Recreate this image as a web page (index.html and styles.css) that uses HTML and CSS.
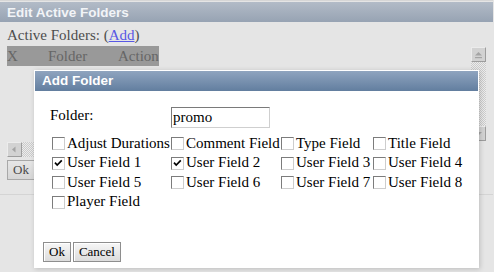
FILE: index.html
```html
<!DOCTYPE html>
<html>
<head>
<meta charset="utf-8">
<title>Edit Active Folders</title>
<link rel="stylesheet" href="styles.css">
</head>
<body>
<div class="page">
  <div class="page-head">Edit Active Folders</div>
  <div class="page-body">
    <div class="active-line">Active Folders: (<a href="#" class="add-link">Add</a>)</div>
    <div class="pane">
      <div class="pane-view">
        <div class="list-head"><span class="c-x">X</span><span class="c-folder">Folder</span><span class="c-action">Action</span></div>
      </div>
      <div class="vscroll">
        <span class="sbtn"><svg width="13" height="13" viewBox="0 0 13 13"><path d="M3 7.5 L6.5 4 L10 7.5 Z" fill="#a4a4a4"/><rect x="3" y="9" width="7" height="1.2" fill="#a4a4a4"/></svg></span>
        <span class="track"></span>
        <span class="sbtn"><svg width="13" height="13" viewBox="0 0 13 13"><path d="M3 5 L6.5 8.5 L10 5 Z" fill="#a4a4a4"/></svg></span>
      </div>
      <div class="hscroll">
        <span class="sbtn"><svg width="13" height="13" viewBox="0 0 13 13"><path d="M7.5 3.5 L4 6.5 L7.5 9.5 Z" fill="#a4a4a4"/></svg></span>
        <span class="track"></span>
        <span class="sbtn"><svg width="13" height="13" viewBox="0 0 13 13"><path d="M5.5 3.5 L9 6.5 L5.5 9.5 Z" fill="#a4a4a4"/></svg></span>
      </div>
      <div class="corner"></div>
    </div>
    <button class="bg-btn" type="button">Ok</button>
  </div>
</div>

<div class="dialog">
  <div class="dlg-head">Add Folder</div>
  <div class="dlg-body">
    <div class="fields">
      <div class="folder-label">Folder:</div>
      <input class="folder-input" type="text" value="promo">

      <label class="opt r1 c1"><span class="box"></span><span class="lbl">Adjust Durations</span></label>
      <label class="opt r1 c2"><span class="box"></span><span class="lbl">Comment Field</span></label>
      <label class="opt r1 c3"><span class="box"></span><span class="lbl">Type Field</span></label>
      <label class="opt r1 c4"><span class="box"></span><span class="lbl">Title Field</span></label>

      <label class="opt r2 c1"><span class="box"><svg width="11" height="11" viewBox="0 0 11 11"><path d="M2 4.6 L4.2 7 L8.8 2.4" fill="none" stroke="#000" stroke-width="1.7"/></svg></span><span class="lbl">User Field 1</span></label>
      <label class="opt r2 c2"><span class="box"><svg width="11" height="11" viewBox="0 0 11 11"><path d="M2 4.6 L4.2 7 L8.8 2.4" fill="none" stroke="#000" stroke-width="1.7"/></svg></span><span class="lbl">User Field 2</span></label>
      <label class="opt r2 c3"><span class="box"></span><span class="lbl">User Field 3</span></label>
      <label class="opt r2 c4"><span class="box"></span><span class="lbl">User Field 4</span></label>

      <label class="opt r3 c1"><span class="box"></span><span class="lbl">User Field 5</span></label>
      <label class="opt r3 c2"><span class="box"></span><span class="lbl">User Field 6</span></label>
      <label class="opt r3 c3"><span class="box"></span><span class="lbl">User Field 7</span></label>
      <label class="opt r3 c4"><span class="box"></span><span class="lbl">User Field 8</span></label>

      <label class="opt r4 c1"><span class="box"></span><span class="lbl">Player Field</span></label>
    </div>
    <div class="dlg-foot">
      <button class="btn" type="button">Ok</button>
      <button class="btn" type="button">Cancel</button>
    </div>
  </div>
</div>
</body>
</html>
```

FILE: styles.css
```css
html, body {
  margin: 0;
  padding: 0;
}

body {
  background: #e5e5e5;
  font-family: "Liberation Serif", "Times New Roman", serif;
  font-size: 15px;
  color: #4a4a4a;
  position: relative;
  width: 494px;
  height: 272px;
  overflow: hidden;
}

.page {
  border-top: 1px solid #d6d6d6;
  padding-top: 1px;
  border-bottom: 1px solid #d4d4d4;
  width: 493px;
}

.page-head {
  height: 20px;
  box-sizing: border-box;
  padding: 1px 0 0 7px;
  line-height: 19px;
  background: linear-gradient(#b2bbc7, #97a3b3);
  color: #f2f4f7;
  font-family: "Liberation Sans", Arial, sans-serif;
  font-weight: bold;
  font-size: 13.5px;
}

.page-body {
  padding: 5px 7px 14px;
}

.active-line {
  line-height: 17px;
  color: #4d4d4d;
}

.add-link {
  color: #5858e4;
  text-decoration: underline;
}

.pane {
  margin-top: 2px;
  width: 480px;
  height: 112px;
  display: grid;
  grid-template-columns: 1fr 16px;
  grid-template-rows: 1fr 16px;
}

.pane-view {
  overflow: hidden;
}

.list-head {
  display: inline-flex;
  background: #999999;
  color: #666666;
  height: 20px;
  line-height: 20px;
}

.c-x { width: 41px; }
.c-folder { width: 70px; }
.c-action { padding-right: 0; }

.vscroll {
  display: flex;
  flex-direction: column;
  padding: 1px 1px 1px 0;
}

.hscroll {
  display: flex;
  padding: 0 0 1px 0;
}

.sbtn {
  width: 15px;
  height: 15px;
  box-sizing: border-box;
  flex: none;
  background: #d2d2d2;
  border: 1px solid;
  border-color: #ececec #9d9d9d #9d9d9d #ececec;
  display: flex;
  align-items: center;
  justify-content: center;
}

.track {
  flex: 1;
  background: repeating-conic-gradient(#cbcbcb 0 25%, #ececec 0 50%) 0 0 / 2px 2px;
}

.corner {
  background: #e5e5e5;
}

.bg-btn {
  margin-top: 2px;
  height: 20px;
  padding: 0 5px;
  font-family: "Liberation Serif", "Times New Roman", serif;
  font-size: 13px;
  color: #4a4a4a;
  background: linear-gradient(#e6e6e6, #d6d6d6);
  border: 1px solid #a8a8a8;
  width: 60px;
  text-align: left;
}

/* dialog overlay */
.dialog {
  position: absolute;
  left: 34px;
  top: 70px;
  width: 445px;
  height: 198px;
  box-sizing: border-box;
  border: 1px solid #ffffff;
  background: #ffffff;
  box-shadow: 1px 1px 5px rgba(0, 0, 0, 0.18);
  color: #000;
}

.dlg-head {
  height: 20px;
  line-height: 20px;
  padding-left: 7px;
  background: linear-gradient(#8fa4bf, #627e9f);
  color: #ffffff;
  font-family: "Liberation Sans", Arial, sans-serif;
  font-weight: bold;
  font-size: 13.5px;
}

.dlg-body {
  padding: 15px 8px 0;
}

.fields {
  margin-left: 9px;
  display: grid;
  grid-template-columns: 119px 110px 92px auto;
  grid-template-rows: 28px repeat(4, 19.5px);
}

.folder-label {
  grid-column: 1;
  grid-row: 1;
  margin: 1px 0 0 -2px;
  line-height: 17px;
}

.folder-input {
  grid-column: 2;
  grid-row: 1;
  align-self: start;
  margin: 1px 0 0 0;
  width: 99px;
  height: 21px;
  box-sizing: border-box;
  padding: 0 1px;
  border: 1px solid;
  border-color: #7a7a7a #cfcfcf #cfcfcf #7a7a7a;
  font-family: "Liberation Serif", "Times New Roman", serif;
  font-size: 15px;
  color: #000;
  outline: none;
}

.opt {
  display: flex;
  align-items: center;
  gap: 2px;
  white-space: nowrap;
}

.opt .lbl {
  line-height: 17px;
  margin-top: -1px;
}

.r1 { grid-row: 2; }
.r2 { grid-row: 3; }
.r3 { grid-row: 4; }
.r4 { grid-row: 5; }
.c1 { grid-column: 1; }
.c2 { grid-column: 2; }
.c3 { grid-column: 3; }
.c4 { grid-column: 4; }

.box {
  width: 13px;
  height: 13px;
  box-sizing: border-box;
  flex: none;
  background: #ffffff;
  border: 1px solid;
  border-color: #7c7c7c #cdcdcd #cdcdcd #7c7c7c;
  display: flex;
  align-items: center;
  justify-content: center;
}

.dlg-foot {
  margin-top: 30px;
  display: flex;
  gap: 2px;
}

.btn {
  height: 20px;
  padding: 0 5px;
  font-family: "Liberation Serif", "Times New Roman", serif;
  font-size: 13px;
  color: #000;
  background: linear-gradient(#f7f7f7, #dcdcdc);
  border: 1px solid #8e8e8e;
  box-shadow: inset 1px 1px 0 #ffffff;
}
```
